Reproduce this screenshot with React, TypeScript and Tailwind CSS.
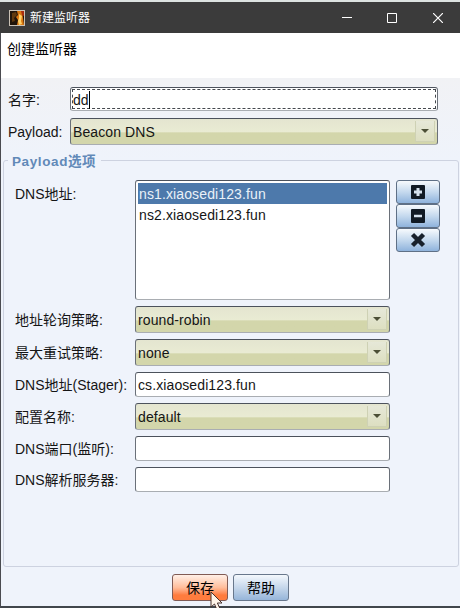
import type { ReactNode } from "react";

const fieldBorder =
  "border border-t-[#4c525c] border-l-[#6a7079] border-r-[#6a7079] border-b-[#a9adb2] rounded-[3px]";

function Row({ label, className, labelClass, children }: { label: string; className: string; labelClass: string; children: ReactNode }) {
  return (
    <div className={`flex items-stretch ${className}`}>
      <span className={`flex shrink-0 items-center whitespace-nowrap ${labelClass}`}>{label}</span>
      {children}
    </div>
  );
}

function Combo({ value }: { value: string }) {
  return (
    <div
      className={`flex flex-1 items-center justify-between bg-linear-to-b from-[#e4e5d0] from-0% via-[#e9ebd3] via-50% to-[#d3d6ab] to-56% pr-[2px] pl-[2px] ${fieldBorder} border-b-[#999c85]`}
    >
      <span className="tracking-[0.1px]">{value}</span>
      <span className="flex h-[21px] w-[20px] items-center justify-center border-r border-b border-l border-[#ced1b4] bg-linear-to-b from-[#e6e8d8] to-[#dddfc1]">
        <svg width="8" height="4" viewBox="0 0 8 4">
          <path d="M0 0h8L4 4z" fill="#4c4f36" />
        </svg>
      </span>
    </div>
  );
}

function Field({ value }: { value?: string }) {
  return <div className={`flex flex-1 items-center bg-white pl-[2px] tracking-[0.1px] ${fieldBorder}`}>{value}</div>;
}

function ToolButton({ children }: { children: ReactNode }) {
  return (
    <button className="flex h-6 w-11 items-center justify-center rounded-[3px] border border-[#5f7086] bg-linear-to-b from-[#f7fafd] from-0% via-[#c5d9ee] via-50% to-[#8fb3dc] to-100%">
      <svg width="16" height="16" viewBox="0 0 16 16">
        {children}
      </svg>
    </button>
  );
}

export default function App() {
  return (
    <div className="flex h-[608px] w-[460px] flex-col overflow-hidden bg-[#eff3fb] font-['Liberation_Sans','Noto_Sans_CJK_SC',sans-serif] text-[14px] leading-5 text-[#151515]">
      <div className="h-[2px] shrink-0 bg-[#dde3e1]" />
      <header className="flex h-[31px] shrink-0 items-center bg-[#3b3b3b] pl-[9px] text-white">
        <svg width="16" height="16" viewBox="0 0 16 16">
          <rect width="16" height="16" fill="#c9c1b5" />
          <rect x="1" y="1" width="14" height="14" fill="#201409" />
          <path d="M3 3l4-1 1 3-3 3 1 3-3 1z" fill="#60390e" />
          <path d="M8 1h5l1 7 1 7H8l1-5-2-3 2-2z" fill="#d87712" />
          <path d="M10 4l3 2-1 5 1 3-3 1-1-4 1-3z" fill="#ffd269" />
          <path d="M12 1h3v5l-2-1z" fill="#a82d10" />
        </svg>
        <span className="ml-[5px] text-[12px]">新建监听器</span>
        <div className="mr-[17px] ml-auto flex items-center gap-[35px]">
          <svg width="10" height="10" viewBox="0 0 10 10">
            <path d="M0 4.5h10" stroke="white" />
          </svg>
          <svg width="10" height="10" viewBox="0 0 10 10">
            <path d="M.5.5h9v9h-9z" stroke="white" fill="none" />
          </svg>
          <svg className="ml-px" width="10" height="10" viewBox="0 0 10 10">
            <path d="M0 0l10 10M10 0L0 10" stroke="white" strokeWidth="1.2" />
          </svg>
        </div>
      </header>

      <main className="flex flex-1 flex-col border-b-2 border-l border-b-[#41464c] border-l-[#4a4b50]">
        <div className="h-[45px] shrink-0 bg-white pt-[6px] pl-[6px] text-black">创建监听器</div>
        <div className="h-[82px] shrink-0 bg-linear-to-b from-[#f1f2f5] to-[#eff3fb] pt-[9px] pr-[22px] pl-[7px]">
          <Row label="名字:" className="h-[24px]" labelClass="w-[62px] pt-[2px]">
            <div className={`flex flex-1 bg-white p-px ${fieldBorder}`}>
              <div className="flex flex-1 items-center border border-dashed border-[#44484e] pt-px">
                <span>dd</span>
                <span className="h-[18px] w-px bg-black" />
              </div>
            </div>
          </Row>
          <Row label="Payload:" className="mt-[7px] h-[27px]" labelClass="w-[62px]">
            <Combo value="Beacon DNS" />
          </Row>
        </div>

        <section className="mr-px ml-[2px] flex h-[407px] shrink-0 flex-col rounded-[3px] border border-[#cdd2e0] pr-[18px] pl-[11px]">
          <h2 className="-mt-[9px] -ml-[7px] h-[20px] w-[93px] shrink-0 bg-[#eff3fb] pl-[4px] text-[13.5px] font-bold tracking-[0.6px] whitespace-nowrap text-[#6189b8]">
            Payload选项
          </h2>
          <div className="mt-[8px] flex h-[120px] shrink-0 items-start">
            <span className="w-[120px] shrink-0 pt-[4px]">DNS地址:</span>
            <div className={`h-[120px] w-[255px] shrink-0 bg-white p-[2px] tracking-[0.12px] ${fieldBorder}`}>
              <div className="flex h-[21px] items-center bg-[#4d79ab] pl-px text-[#e9f1f8]">ns1.xiaosedi123.fun</div>
              <div className="flex h-[22px] items-center pl-px">ns2.xiaosedi123.fun</div>
            </div>
            <div className="ml-[6px] flex shrink-0 flex-col">
              <ToolButton>
                <rect x="1" y="1" width="14" height="14" rx="1" fill="#111a24" />
                <path d="M8 4v8M4 8h8" stroke="#d5e1ed" strokeWidth="3" />
              </ToolButton>
              <ToolButton>
                <rect x="1" y="1" width="14" height="14" rx="1" fill="#111a24" />
                <path d="M4 8h8" stroke="#d5e1ed" strokeWidth="2.5" />
              </ToolButton>
              <ToolButton>
                <path d="M2.5 2.5l11 11M13.5 2.5l-11 11" stroke="#18212c" strokeWidth="4.4" />
              </ToolButton>
            </div>
          </div>
          <div className="flex w-[375px] flex-col pt-[6px]">
            <Row label="地址轮询策略:" className="h-[27px]" labelClass="w-[120px] pt-px">
              <Combo value="round-robin" />
            </Row>
            <Row label="最大重试策略:" className="mt-[6px] h-[27px]" labelClass="w-[120px]">
              <Combo value="none" />
            </Row>
            <Row label="DNS地址(Stager):" className="mt-[6px] h-[25px]" labelClass="w-[120px]">
              <Field value="cs.xiaosedi123.fun" />
            </Row>
            <Row label="配置名称:" className="mt-[6px] h-[27px]" labelClass="w-[120px]">
              <Combo value="default" />
            </Row>
            <Row label="DNS端口(监听):" className="mt-[6px] h-[25px]" labelClass="w-[120px]">
              <Field />
            </Row>
            <Row label="DNS解析服务器:" className="mt-[6px] h-[25px]" labelClass="w-[120px]">
              <Field />
            </Row>
          </div>
        </section>

        <footer className="flex gap-[5px] pt-[7px] pl-[171px] text-black">
          <button className="relative h-[27px] w-[56px] rounded-[3px] border border-[#805b55] bg-linear-to-b from-[#fff0e8] from-0% via-[#ffbd9b] via-50% to-[#ff7c3e] to-80%">
            保存
            <svg className="absolute top-[16px] left-[37px]" width="13" height="20" viewBox="0 0 13 20">
              <path d="M1 1v15l3.5-3 2.5 6 3-1.3-2.6-5.7H12z" fill="#fff4e9" stroke="#49302b" />
            </svg>
          </button>
          <button className="h-[27px] w-[56px] rounded-[3px] border border-[#68778c] bg-linear-to-b from-[#f4f8fd] from-0% via-[#c6d7eb] via-50% to-[#96b5d9] to-100%">
            帮助
          </button>
        </footer>
      </main>
    </div>
  );
}
